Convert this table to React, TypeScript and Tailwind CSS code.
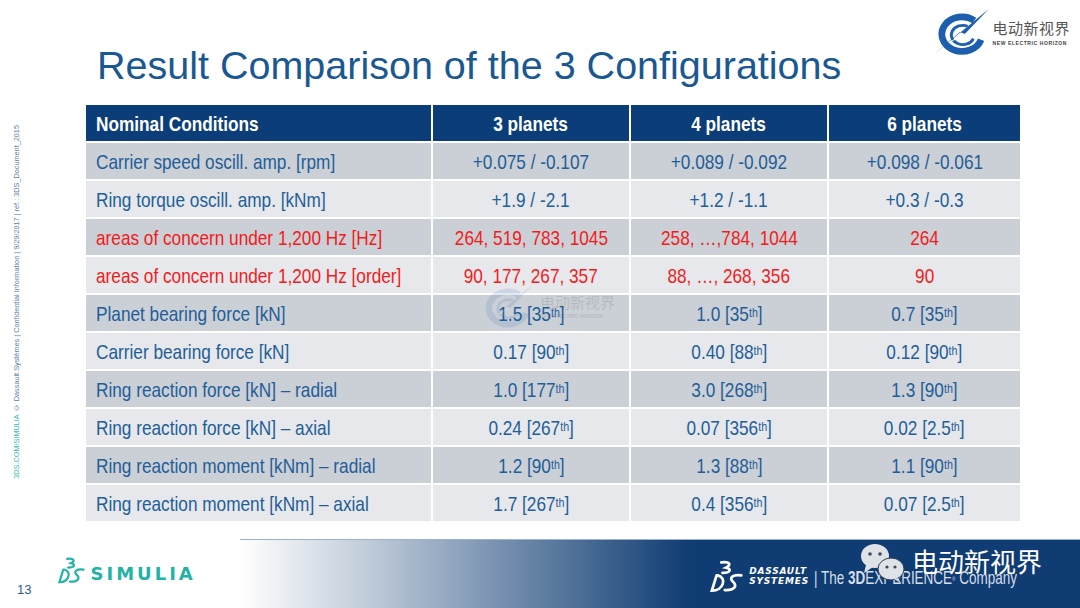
import React from 'react';

type Cell = { v: string; sup?: string };
type Row = { label: string; red?: boolean; cells: Cell[] };

const rows: Row[] = [
    { label: 'Carrier speed oscill. amp. [rpm]', cells: [{ v: '+0.075 / -0.107' }, { v: '+0.089 / -0.092' }, { v: '+0.098 / -0.061' }] },
    { label: 'Ring torque oscill. amp. [kNm]', cells: [{ v: '+1.9 / -2.1' }, { v: '+1.2 / -1.1' }, { v: '+0.3 / -0.3' }] },
    { label: 'areas of concern under 1,200 Hz [Hz]', red: true, cells: [{ v: '264, 519, 783, 1045' }, { v: '258, …,784, 1044' }, { v: '264' }] },
    { label: 'areas of concern under 1,200 Hz [order]', red: true, cells: [{ v: '90, 177, 267, 357' }, { v: '88, …, 268, 356' }, { v: '90' }] },
    { label: 'Planet bearing force [kN]', cells: [{ v: '1.5 [35', sup: 'th' }, { v: '1.0 [35', sup: 'th' }, { v: '0.7 [35', sup: 'th' }] },
    { label: 'Carrier bearing force [kN]', cells: [{ v: '0.17 [90', sup: 'th' }, { v: '0.40 [88', sup: 'th' }, { v: '0.12 [90', sup: 'th' }] },
    { label: 'Ring reaction force [kN] – radial', cells: [{ v: '1.0 [177', sup: 'th' }, { v: '3.0 [268', sup: 'th' }, { v: '1.3 [90', sup: 'th' }] },
    { label: 'Ring reaction force [kN] – axial', cells: [{ v: '0.24 [267', sup: 'th' }, { v: '0.07 [356', sup: 'th' }, { v: '0.02 [2.5', sup: 'th' }] },
    { label: 'Ring reaction moment [kNm] – radial', cells: [{ v: '1.2 [90', sup: 'th' }, { v: '1.3 [88', sup: 'th' }, { v: '1.1 [90', sup: 'th' }] },
    { label: 'Ring reaction moment [kNm] – axial', cells: [{ v: '1.7 [267', sup: 'th' }, { v: '0.4 [356', sup: 'th' }, { v: '0.07 [2.5', sup: 'th' }] },
];

function HorizonMark({ className }: { className?: string }) {
    return (
        <svg viewBox="0 0 62 50" className={className}>
            <path d="M46 13 A21 18 0 1 0 53 33" fill="none" stroke="#1d5fae" strokeWidth="7" />
            <path d="M39 19 A12 10 0 1 0 45 32" fill="none" stroke="#1d5fae" strokeWidth="3" />
            <polygon points="3,49 61,1 36,27 31,25" fill="#1d5fae" />
            <polygon points="20,36 33,26 36,28" fill="#ffffff" />
        </svg>
    );
}

function DsMark({ color, className }: { color: string; className?: string }) {
    return (
        <svg viewBox="0 0 30 28" className={className} fill="none" stroke={color} strokeWidth="2.3" strokeLinecap="round">
            <path d="M11 2 C18 1 20 4 15 6.5 C20 7.5 19 11 12 11" />
            <path d="M7 13 L3 26 C13 26 16 15 8 13" />
            <path d="M28 13 C21 12 17 15 21 18.5 C25 22 22 26 14 25.5" />
        </svg>
    );
}

function Wechat() {
    return (
        <svg viewBox="0 0 46 40" className="w-[46px] h-[40px]">
            <ellipse cx="15" cy="13" rx="14" ry="12" fill="#dfe3e8" />
            <polygon points="6,22 4,30 13,24" fill="#dfe3e8" />
            <circle cx="10" cy="11" r="1.8" fill="#3b4a5c" />
            <circle cx="20" cy="11" r="1.8" fill="#3b4a5c" />
            <ellipse cx="31" cy="26" rx="13" ry="11" fill="#dfe3e8" stroke="#2d3e52" strokeWidth="1" />
            <polygon points="38,35 41,40 34,36" fill="#dfe3e8" />
            <circle cx="27" cy="24" r="1.6" fill="#3b4a5c" />
            <circle cx="35" cy="24" r="1.6" fill="#3b4a5c" />
        </svg>
    );
}

// Arial Narrow look: squeeze the Liberation Sans glyphs horizontally
function Narrow({ children, left }: { children: React.ReactNode; left?: boolean }) {
    return (
        <span className={`inline-block whitespace-nowrap scale-x-[0.82] ${left ? 'origin-left' : 'origin-center'}`}>
            {children}
        </span>
    );
}

export default function App() {
    return (
        <div className="w-[1080px] h-[608px] bg-white flex flex-col overflow-hidden font-['Liberation_Sans',Arial,sans-serif]">
            {/* title + corner logo */}
            <div className="h-[105px] flex justify-between items-start">
                <h1 className="pt-[46px] pl-[97px] text-[39.5px] leading-none text-[#1a5891]">
                    Result Comparison of the 3 Configurations
                </h1>
                <div className="pt-[8px] pr-[10px] flex items-center gap-[2px]">
                    <HorizonMark className="w-[60px] h-[48px]" />
                    <div className="flex flex-col items-start pt-[2px]">
                        <span className="text-[15px] leading-none tracking-[0.5px] text-[#555] font-['Noto_Sans_CJK_SC',sans-serif]">电动新视界</span>
                        <span className="text-[5px] leading-none mt-[6px] font-bold tracking-[0.6px] text-[#444]">NEW ELECTRIC HORIZON</span>
                    </div>
                </div>
            </div>

            {/* side text + table */}
            <div className="flex">
                <div className="w-[86px] flex items-start pl-[13px] pt-[20px]">
                    <div className="[writing-mode:vertical-rl] rotate-180 text-[7.3px] leading-none whitespace-nowrap text-[#5b7fa6]">
                        <span className="text-[#35bdb3]">3DS.COM/SIMULIA</span> © Dassault Systèmes | Confidential Information | 9/29/2017 | ref.: 3DS_Document_2015
                    </div>
                </div>
                <div className="relative w-[934px] grid grid-cols-[345px_196px_196px_191px] gap-[2px] text-[21px] leading-none">
                    <div className="h-[36px] bg-[#0b3e78] text-white font-bold flex items-center pl-[10px]"><Narrow left>Nominal Conditions</Narrow></div>
                    <div className="h-[36px] bg-[#0b3e78] text-white font-bold flex items-center justify-center"><Narrow>3 planets</Narrow></div>
                    <div className="h-[36px] bg-[#0b3e78] text-white font-bold flex items-center justify-center"><Narrow>4 planets</Narrow></div>
                    <div className="h-[36px] bg-[#0b3e78] text-white font-bold flex items-center justify-center"><Narrow>6 planets</Narrow></div>
                    {rows.map((r, i) => {
                        const bg = i % 2 === 0 ? 'bg-[#cbcfd6]' : 'bg-[#e6e8ec]';
                        const fg = r.red ? 'text-[#f21b1b]' : 'text-[#1f5e98]';
                        return (
                            <React.Fragment key={i}>
                                <div className={`h-[36px] ${bg} ${fg} flex items-center pl-[10px] overflow-visible`}>
                                    <Narrow left>{r.label}</Narrow>
                                </div>
                                {r.cells.map((c, j) => (
                                    <div key={j} className={`h-[36px] ${bg} ${fg} flex items-center justify-center`}>
                                        <Narrow>
                                            {c.v}
                                            {c.sup && <sup className="text-[13px] relative top-[-4px] align-baseline">{c.sup}</sup>}
                                            {c.sup && ']'}
                                        </Narrow>
                                    </div>
                                ))}
                            </React.Fragment>
                        );
                    })}
                    {/* faint watermark */}
                    <div className="absolute left-[392px] top-[178px] flex items-center gap-[6px] opacity-[0.13] pointer-events-none">
                        <HorizonMark className="w-[56px] h-[46px]" />
                        <div className="flex flex-col">
                            <span className="text-[15px] leading-none text-[#333] font-['Noto_Sans_CJK_SC',sans-serif]">电动新视界</span>
                            <span className="text-[5px] leading-none mt-[5px] font-bold text-[#333]">NEW ELECTRIC HORIZON</span>
                        </div>
                    </div>
                </div>
            </div>

            {/* footer band */}
            <div className="mt-auto h-[69px] flex">
                <div className="w-[240px] flex items-end pb-[10px]">
                    <span className="ml-[17px] mb-[2px] text-[13px] leading-none text-[#2a5a95]">13</span>
                    <div className="ml-[25px] flex items-end gap-[4px] pb-[14px]">
                        <DsMark color="#22b3a6" className="w-[30px] h-[27px]" />
                        <span className="text-[18px] leading-none font-bold tracking-[3px] text-[#22b3a6] font-['DejaVu_Sans',sans-serif] pb-[1px]">SIMULIA</span>
                    </div>
                </div>
                <div className="relative flex-1 border-t border-[#9fb2cb] bg-[linear-gradient(90deg,#ffffff_0px,#c4cfdc_120px,#0f3c73_450px,#0f3c73_100%)] flex items-center justify-end pr-[64px]">
                    <div className="flex items-center gap-[5px] pt-[4px]">
                        <DsMark color="#ffffff" className="w-[36px] h-[33px]" />
                        <div className="flex flex-col text-white italic font-bold text-[9px] leading-[10px] tracking-[0.8px] font-['DejaVu_Sans',sans-serif]">
                            <span>DASSAULT</span>
                            <span>SYSTEMES</span>
                        </div>
                        <span className="w-[202px] pt-[6px] text-[17.5px] leading-none text-[#d7dee8]">
                            <span className="inline-block whitespace-nowrap scale-x-[0.77] origin-left">
                                | The <b>3D</b>EXPERIENCE<sup className="text-[6px]">®</sup> Company
                            </span>
                        </span>
                    </div>
                    {/* wechat watermark */}
                    <div className="absolute left-[620px] top-[3px] flex items-center gap-[6px]">
                        <Wechat />
                        <span className="text-[26px] leading-none text-white font-['Noto_Sans_CJK_SC',sans-serif] pb-[4px]">电动新视界</span>
                    </div>
                </div>
            </div>
        </div>
    );
}
